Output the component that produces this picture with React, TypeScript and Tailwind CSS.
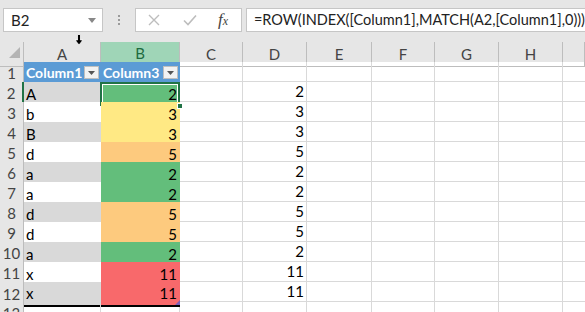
import React from "react";

const FONT = { fontFamily: "Lato, 'Open Sans', 'Liberation Sans', sans-serif" };

type Row = { n: number; a: string; b: number | null; d: number | null };
const rows: Row[] = [
  { n: 2, a: "A", b: 2, d: 2 },
  { n: 3, a: "b", b: 3, d: 3 },
  { n: 4, a: "B", b: 3, d: 3 },
  { n: 5, a: "d", b: 5, d: 5 },
  { n: 6, a: "a", b: 2, d: 2 },
  { n: 7, a: "a", b: 2, d: 2 },
  { n: 8, a: "d", b: 5, d: 5 },
  { n: 9, a: "d", b: 5, d: 5 },
  { n: 10, a: "a", b: 2, d: 2 },
  { n: 11, a: "x", b: 11, d: 11 },
  { n: 12, a: "x", b: 11, d: 11 },
];

function bColor(v: number) {
  if (v === 2) return "bg-[#63be7b]";
  if (v === 3) return "bg-[#ffe984]";
  if (v === 5) return "bg-[#fdca7e]";
  return "bg-[#f8696b]";
}

const grid = "grid grid-cols-[24px_77px_79px_63px_64px_65px_63px_64px_64px_1fr]";

function FilterBtn() {
  return (
    <div className="w-[15px] h-[13px] bg-[#f2f2f2] border border-[#bfbfbf] flex items-center justify-center mr-[2px]">
      <svg width="7" height="4" viewBox="0 0 7 4">
        <path d="M0 0 L7 0 L3.5 4 Z" fill="#555" />
      </svg>
    </div>
  );
}

function EmptyCells() {
  return (
    <>
      {Array.from({ length: 7 }).map((_, i) => (
        <div key={i} className={`h-[20px] border-b border-[#d9d9d9] ${i < 6 ? "border-r" : ""}`} />
      ))}
    </>
  );
}

export default function App() {
  return (
    <div className="w-[585px] h-[312px] overflow-hidden bg-white text-[15px] text-black relative" style={FONT}>
      {/* toolbar */}
      <div className="h-[42px] bg-[#e6e6e6] flex items-start pt-[8px] pl-[3px]">
        <div className="w-[101px] h-[24px] bg-white border border-[#c6c6c6] flex items-center justify-between pl-[7px] pr-[6px]">
          <span className="text-[15px] text-[#222]">B2</span>
          <svg width="8" height="5" viewBox="0 0 8 5">
            <path d="M0 0 L8 0 L4 5 Z" fill="#888" />
          </svg>
        </div>
        <div className="w-[32px] h-[24px] flex flex-col items-center justify-center gap-[2px]">
          <div className="w-[2px] h-[2px] bg-[#9a9a9a]" />
          <div className="w-[2px] h-[2px] bg-[#9a9a9a]" />
          <div className="w-[2px] h-[2px] bg-[#9a9a9a]" />
        </div>
        <div className="w-[108px] h-[24px] bg-white border border-[#c6c6c6] flex items-center">
          <svg width="12" height="12" viewBox="0 0 12 12" className="ml-[12px]">
            <path d="M1 1 L11 11 M11 1 L1 11" stroke="#bdbdbd" strokeWidth="1.4" />
          </svg>
          <svg width="14" height="12" viewBox="0 0 14 12" className="ml-[23px]">
            <path d="M1 6.5 L5 10.5 L13 1.5" stroke="#bdbdbd" strokeWidth="1.6" fill="none" />
          </svg>
          <span
            className="ml-[21px] text-[17px] italic text-[#444]"
            style={{ fontFamily: "'Liberation Serif', serif" }}
          >
            f<span className="text-[12px]">x</span>
          </span>
        </div>
        <div className="ml-[4px] flex-1 h-[24px] bg-white border border-[#c6c6c6] border-r-0 flex items-center pl-[7px]">
          <span className="text-[14.5px] text-[#222] whitespace-nowrap">
            =ROW(INDEX([Column1],MATCH(A2,[Column1],0)))
          </span>
        </div>
      </div>

      {/* column headers */}
      <div className={`${grid} h-[20px] bg-[#e6e6e6] text-[#444]`}>
        <div className="border-r border-b border-[#bdbdbd] relative">
          <svg width="24" height="20" viewBox="0 0 24 20" className="absolute left-0 top-0">
            <path d="M9 16 L20 16 L20 5 Z" fill="#b4b4b4" />
          </svg>
        </div>
        {["A", "B", "C", "D", "E", "F", "G", "H", ""].map((l) => (
          <div
            key={l || "I"}
            className={`flex items-center justify-center ${
              l === "B"
                ? "bg-[#9fd5b7] text-[#1d6b40] border-b-2 border-[#217346] border-r border-r-[#bdbdbd]"
                : "border-r border-b border-[#bdbdbd]"
            }`}
          >
            {l}
          </div>
        ))}
      </div>

      {/* row 1 */}
      <div className={`${grid} h-[20px]`}>
        <div className="bg-[#e6e6e6] border-r border-b border-[#bdbdbd] text-[#444] flex items-center justify-center">1</div>
        <div className="bg-[#5b9bd5] border-b-2 border-black flex items-center justify-between pl-[2px] text-white font-bold text-[14px]">
          <span>Column1</span>
          <FilterBtn />
        </div>
        <div className="bg-[#5b9bd5] border-b-2 border-[#217346] flex items-center justify-between pl-[2px] text-white font-bold text-[14px]">
          <span>Column3</span>
          <FilterBtn />
        </div>
        <EmptyCells />
      </div>

      {/* data rows */}
      {rows.map((r) => (
        <div key={r.n} className={`${grid} h-[20px]`}>
          <div
            className={`bg-[#e6e6e6] border-b border-[#bdbdbd] text-[#444] flex items-center justify-center ${
              r.n === 2 ? "border-r-2 border-r-[#217346]" : "border-r"
            }`}
          >
            {r.n}
          </div>
          <div
            className={`flex items-center pl-[2px] ${r.n % 2 === 0 ? "bg-[#d9d9d9]" : "bg-white"} ${
              r.n === 12 ? "border-b-2 border-black" : ""
            }`}
          >
            {r.a}
          </div>
          <div
            className={`relative flex items-center justify-end pr-[3px] ${bColor(r.b as number)} ${
              r.n === 12 ? "border-b-2 border-black" : ""
            }`}
          >
            {r.b}
            {r.n === 2 && (
              <>
                <div className="absolute left-[-1px] top-0 right-0 bottom-0 border-2 border-[#217346]">
                  <div className="w-full h-full border border-white" />
                </div>
                <div className="absolute right-[-3px] bottom-[-3px] w-[6px] h-[6px] bg-[#217346] border border-white z-10" />
              </>
            )}
            {r.n === 12 && (
              <svg width="5" height="5" viewBox="0 0 5 5" className="absolute right-0 bottom-0">
                <path d="M5 0 L5 5 L0 5 Z" fill="#7a5fb8" />
              </svg>
            )}
          </div>
          <div className="h-[20px] border-r border-b border-[#d9d9d9]" />
          <div className="h-[20px] border-r border-b border-[#d9d9d9] flex items-center justify-end pr-[2px]">
            {r.d}
          </div>
          <div className="h-[20px] border-r border-b border-[#d9d9d9]" />
          <div className="h-[20px] border-r border-b border-[#d9d9d9]" />
          <div className="h-[20px] border-r border-b border-[#d9d9d9]" />
          <div className="h-[20px] border-r border-b border-[#d9d9d9]" />
          <div className="h-[20px] border-b border-[#d9d9d9]" />
        </div>
      ))}

      {/* row 13 */}
      <div className={`${grid} h-[20px]`}>
        <div className="bg-[#e6e6e6] border-r border-b border-[#bdbdbd] text-[#444] flex items-center justify-center">13</div>
        <div className="border-r border-[#d9d9d9]" />
        <div className="border-r border-[#d9d9d9]" />
        <div className="border-r border-[#d9d9d9]" />
        <div className="border-r border-[#d9d9d9]" />
        <div className="border-r border-[#d9d9d9]" />
        <div className="border-r border-[#d9d9d9]" />
        <div className="border-r border-[#d9d9d9]" />
        <div className="border-r border-[#d9d9d9]" />
        <div />
      </div>

      {/* mouse cursor */}
      <svg width="10" height="12" viewBox="0 0 10 12" className="absolute left-[74px] top-[34px]">
        <path d="M3.5 0.5 H6.5 V6 H9 L5 11 L1 6 H3.5 Z" fill="#000" stroke="#fff" strokeWidth="0.8" />
      </svg>
    </div>
  );
}
